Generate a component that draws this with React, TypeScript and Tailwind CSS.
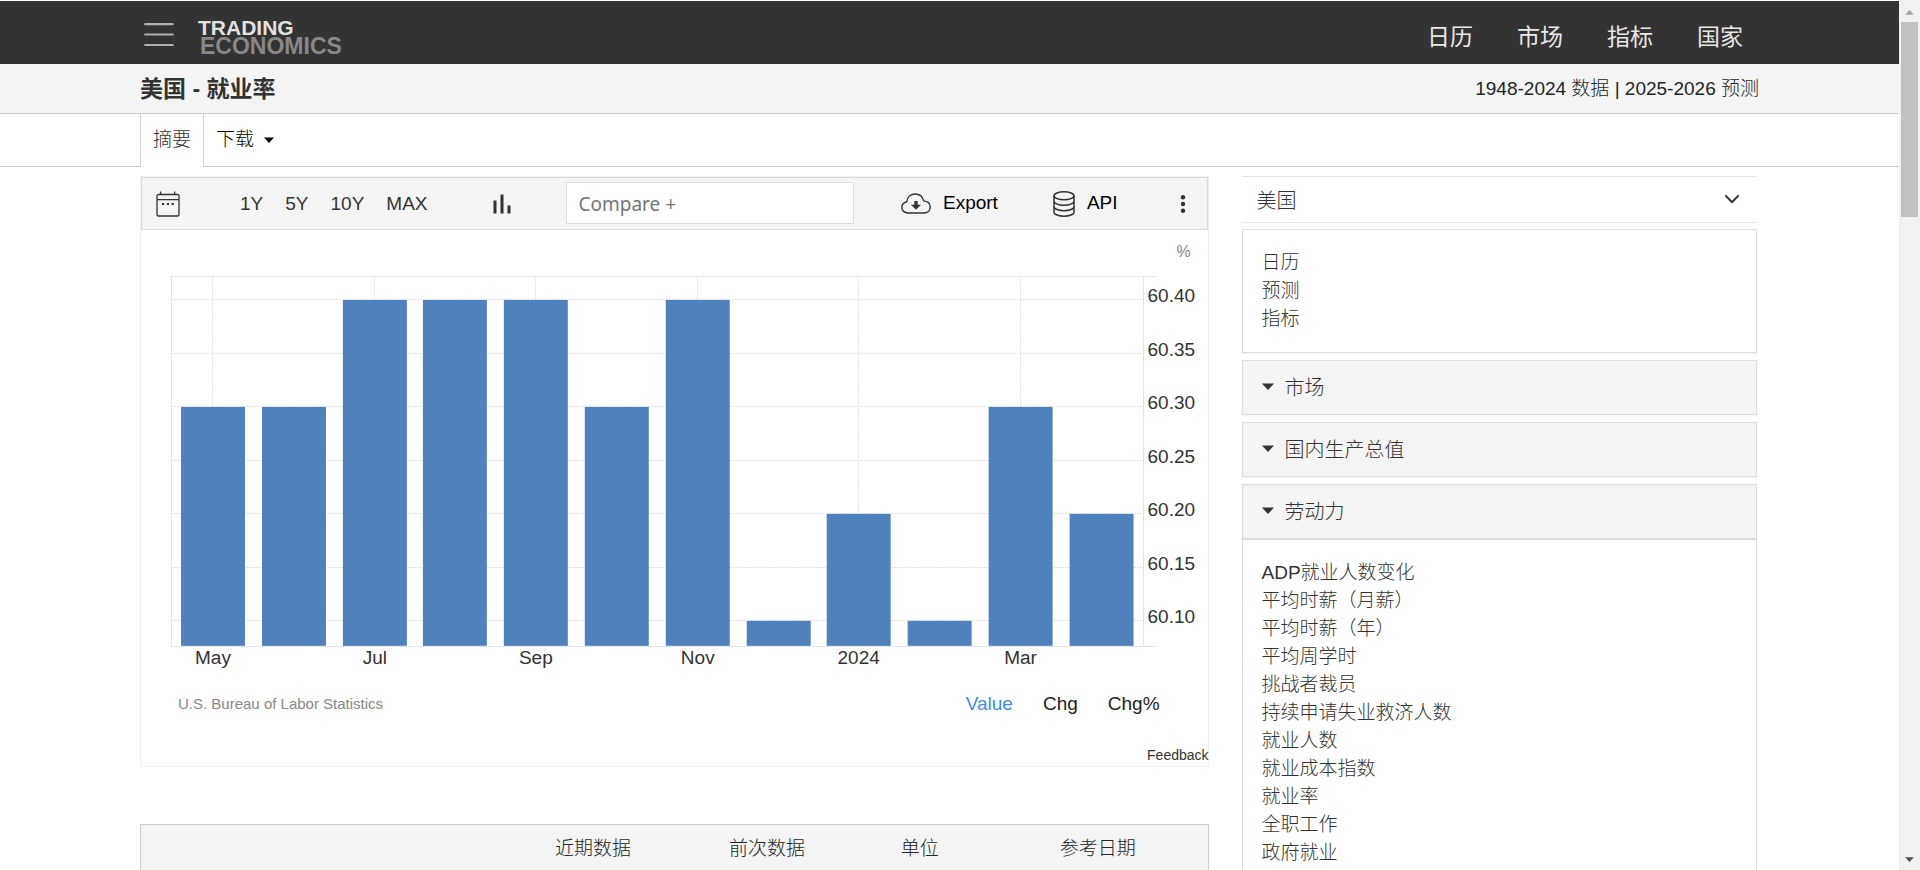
import { useState } from 'react';

interface BarPoint {
  month: string;
  value: number;
  label?: string;
}

interface MenuSection {
  title: string;
  links: string[];
}

const NAV_LINKS = ['日历', '市场', '指标', '国家'];
const RANGES = ['1Y', '5Y', '10Y', 'MAX'];
const MODES = ['Value', 'Chg', 'Chg%'];
const COUNTRY_LINKS = ['日历', '预测', '指标'];

const BARS: BarPoint[] = [
  { month: '2023-05', value: 60.3, label: 'May' },
  { month: '2023-06', value: 60.3 },
  { month: '2023-07', value: 60.4, label: 'Jul' },
  { month: '2023-08', value: 60.4 },
  { month: '2023-09', value: 60.4, label: 'Sep' },
  { month: '2023-10', value: 60.3 },
  { month: '2023-11', value: 60.4, label: 'Nov' },
  { month: '2023-12', value: 60.1 },
  { month: '2024-01', value: 60.2, label: '2024' },
  { month: '2024-02', value: 60.1 },
  { month: '2024-03', value: 60.3, label: 'Mar' },
  { month: '2024-04', value: 60.2 },
];

const TICKS = [60.4, 60.35, 60.3, 60.25, 60.2, 60.15, 60.1];

const SECTIONS: MenuSection[] = [
  { title: '市场', links: [] },
  { title: '国内生产总值', links: [] },
  {
    title: '劳动力',
    links: [
      'ADP就业人数变化',
      '平均时薪（月薪）',
      '平均时薪（年）',
      '平均周学时',
      '挑战者裁员',
      '持续申请失业救济人数',
      '就业人数',
      '就业成本指数',
      '就业率',
      '全职工作',
      '政府就业',
    ],
  },
];

// Chart geometry, in viewBox units
const PLOT = { left: 30, right: 1002, top: 46, bottom: 416 };
const STEP = 80.8;
const BAR_WIDTH = 64;
const xOf = (i: number) => Math.round(72 + i * STEP);
const yOf = (value: number) => Math.round(69 + ((60.4 - value) / 0.3) * 321.5);

function Caret({ className }: { className: string }) {
  return (
    <svg viewBox="0 0 12 7" className={className} aria-hidden="true">
      <path d="M0 0.5h12L6 7z" fill="currentColor" />
    </svg>
  );
}

function Header() {
  return (
    <header className="bg-[#333333]">
      <div className="mx-auto flex h-[63px] max-w-[1619px] items-center justify-between">
        <div className="flex items-center">
          <button aria-label="Menu" className="ml-[3px] mt-1 p-px">
            <svg viewBox="0 0 30 24" className="h-6 w-[30px]" aria-hidden="true">
              <path d="M1.2 1.2h27.6M1.2 11.5h27.6M1.2 22h27.6" stroke="#b0b0b0" strokeWidth="2.2" strokeLinecap="round" />
            </svg>
          </button>
          <a href="#home" className="ml-[23px] mt-[10px] flex flex-col font-bold">
            <span className="text-[21px] leading-[18px] text-[#e2e2e2]">TRADING</span>
            <span className="ml-[2px] text-[23px] leading-[19px] text-[#888888]">ECONOMICS</span>
          </a>
        </div>
        <nav className="mr-4 mt-[10px] flex gap-11 text-[23px] text-[#e8e8e8]">
          {NAV_LINKS.map((link) => (
            <a key={link} href={`#${link}`}>{link}</a>
          ))}
        </nav>
      </div>
    </header>
  );
}

function Tabs() {
  return (
    <div className="border-b border-[#c8c8c8]">
      <div className="mx-auto -mb-px flex h-[53px] max-w-[1619px] text-[19px] font-light">
        <a href="#summary" className="border-x border-[#d5d5d5] bg-white px-3 pt-3 text-[#333333]">摘要</a>
        <button className="flex items-center gap-[10px] px-3 text-black">
          下载
          <Caret className="mb-[2px] h-[6px] w-[10px]" />
        </button>
      </div>
    </div>
  );
}

function CalendarIcon() {
  return (
    <svg viewBox="0 0 24 26" className="h-[26px] w-6" fill="none" stroke="#333333" aria-hidden="true">
      <rect x="1" y="3.5" width="22" height="21.5" rx="1.5" strokeWidth="1.3" />
      <path d="M1 8.6h22M4.6 0.5v3M18.6 0.5v3" strokeWidth="1.3" />
      <path d="M6 13h2.2M10.8 13H13M15.6 13h2.2" strokeWidth="2.2" />
    </svg>
  );
}

function CloudIcon() {
  return (
    <svg viewBox="0 0 30 21" className="h-[21px] w-[30px]" fill="none" aria-hidden="true">
      <path
        d="M7 20C3.4 20 0.8 17.6 0.8 14.3C0.8 11 3.3 9.3 5.8 8.7C6.2 3.9 9.8 1 14.4 1C18.6 1 21.5 3.4 22.7 7.9C26.8 8.3 29.2 10.8 29.2 14.1C29.2 17.4 26.8 20 23.2 20Z"
        stroke="#333333"
        strokeWidth="1.4"
      />
      <path d="M13.3 8h3.4v3.7h3.4L15 16.8L9.9 11.7h3.4z" fill="#333333" />
    </svg>
  );
}

function DatabaseIcon() {
  return (
    <svg viewBox="0 0 22 26" className="h-[26px] w-[22px]" fill="none" stroke="#333333" strokeWidth="1.5" aria-hidden="true">
      <ellipse cx="11" cy="4.8" rx="10" ry="4" />
      <path d="M1 4.8v16.4c0 2.2 4.5 4 10 4s10-1.8 10-4V4.8" />
      <path d="M1 10.3c0 2.2 4.5 4 10 4s10-1.8 10-4M1 15.7c0 2.2 4.5 4 10 4s10-1.8 10-4" />
    </svg>
  );
}

function Toolbar() {
  const [compare, setCompare] = useState('');

  return (
    <div className="flex h-[53px] items-center border border-[#d9d9d9] bg-[#f4f4f4] pl-[14px] pr-[17px] text-[19px] text-[#333333]">
      <button aria-label="Calendar"><CalendarIcon /></button>
      <div className="ml-[60px] flex gap-[22px] pt-[2px]">
        {RANGES.map((range) => (
          <button key={range}>{range}</button>
        ))}
      </div>
      <button aria-label="Chart type" className="ml-[65px]">
        <svg viewBox="0 0 18 20" className="h-5 w-[18px]" aria-hidden="true">
          <path d="M2 6.5v13M9 0.5v19M16 11.5v8" stroke="#333333" strokeWidth="3" />
        </svg>
      </button>
      <input
        type="text"
        aria-label="Compare"
        placeholder="Compare +"
        value={compare}
        onChange={(e) => setCompare(e.target.value)}
        className="mb-px ml-[55px] h-[42px] min-w-0 flex-1 border border-[#dddddd] bg-white px-3 pt-[2px] font-['Noto_Sans',sans-serif] text-[19px] placeholder:text-[#757575]"
      />
      <button className="ml-[47px] flex items-center gap-3 text-black">
        <CloudIcon />
        Export
      </button>
      <button className="ml-[55px] flex items-center gap-3 text-black">
        <DatabaseIcon />
        API
      </button>
      <button aria-label="More" className="ml-[58px]">
        <svg viewBox="0 0 14 18" className="h-[18px] w-[14px]" fill="#333333" aria-hidden="true">
          <circle cx="7" cy="2.2" r="2.2" />
          <circle cx="7" cy="9" r="2.2" />
          <circle cx="7" cy="15.8" r="2.2" />
        </svg>
      </button>
    </div>
  );
}

function BarChart() {
  return (
    <svg viewBox="0 0 1067 445" className="block w-full" role="img" aria-label="U.S. employment rate by month">
      <g stroke="#e3e3e3" strokeDasharray="2 1" shapeRendering="crispEdges">
        <path d={`M${PLOT.left} ${PLOT.top}.5H${PLOT.right}`} />
        {TICKS.map((tick) => (
          <path key={tick} d={`M${PLOT.left} ${yOf(tick)}.5H${PLOT.right}`} />
        ))}
        {BARS.map((bar, i) => bar.label && (
          <path key={bar.month} d={`M${xOf(i) - 1}.5 ${PLOT.top}V${PLOT.bottom}`} />
        ))}
      </g>
      <g stroke="#e3e3e3" fill="none" shapeRendering="crispEdges">
        <path d={`M${PLOT.left}.5 ${PLOT.top}V${PLOT.bottom}`} />
        <path d={`M${PLOT.right}.5 ${PLOT.top}V${PLOT.bottom}`} />
        <path d={`M${PLOT.left} ${PLOT.bottom}.5H${PLOT.right + 12}`} />
        <path d={`M${PLOT.right} ${PLOT.top}.5h12`} />
      </g>
      {BARS.map((bar, i) => (
        <rect
          key={bar.month}
          x={xOf(i) - BAR_WIDTH / 2}
          y={yOf(bar.value) + 1}
          width={BAR_WIDTH}
          height={PLOT.bottom - yOf(bar.value) - 1}
          fill="#4f81bd"
        />
      ))}
      <g fill="#333333" fontSize="19">
        {TICKS.map((tick) => (
          <text key={tick} x="1007" y={yOf(tick) + 3}>{tick.toFixed(2)}</text>
        ))}
        {BARS.map((bar, i) => bar.label && (
          <text key={bar.month} x={xOf(i)} y="434" textAnchor="middle">{bar.label}</text>
        ))}
      </g>
      <text x="1036" y="27" fontSize="16" fill="#888888">%</text>
    </svg>
  );
}

function ChartPanel() {
  const [mode, setMode] = useState('Value');

  return (
    <section className="mb-[57px] border border-[#f1f1f1]">
      <Toolbar />
      <BarChart />
      <div className="flex h-[58px] items-center justify-between pl-[37px] pr-12">
        <span className="text-[15px] text-[#888888]">U.S. Bureau of Labor Statistics</span>
        <div className="flex gap-[30px] text-[19px]">
          {MODES.map((m) => (
            <button
              key={m}
              onClick={() => setMode(m)}
              className={m === mode ? 'text-[#3a8fde]' : 'text-[#222222]'}
            >
              {m}
            </button>
          ))}
        </div>
      </div>
      <div className="flex h-[33px] items-center justify-end pt-3">
        <a href="#feedback" className="-mr-px text-[14px] text-[#333333]">Feedback</a>
      </div>
    </section>
  );
}

function DataTable() {
  return (
    <table className="w-full table-fixed border border-[#cccccc] bg-[#f4f4f4] text-[19px] text-[#212529]">
      <thead>
        <tr className="h-[50px]">
          <td className="w-[34%]" />
          <th scope="col" className="w-[16.8%] font-light">近期数据</th>
          <th scope="col" className="w-[15.8%] font-light">前次数据</th>
          <th scope="col" className="w-[12.8%] font-light">单位</th>
          <th scope="col" className="w-[20.6%] font-light">参考日期</th>
        </tr>
      </thead>
    </table>
  );
}

function Sidebar() {
  const [open, setOpen] = useState('劳动力');

  return (
    <aside className="ml-[33px] mr-[2px] min-w-0 flex-1 font-light text-[#333333]">
      <div className="relative border-y border-[#e4e4ec]">
        <select
          aria-label="国家"
          defaultValue="美国"
          className="h-[45px] w-full appearance-none bg-white px-[15px] pt-[2px] text-[20px]"
        >
          <option>美国</option>
        </select>
        <svg viewBox="0 0 14 9" className="pointer-events-none absolute right-[18px] top-[18px] h-[9px] w-[14px]" fill="none" aria-hidden="true">
          <path d="M1 1l6 6.2L13 1" stroke="#343a40" strokeWidth="2" strokeLinecap="round" strokeLinejoin="round" />
        </svg>
      </div>
      <ul className="mt-[6px] h-[124px] border border-[#dddddd] px-[19px] pt-[19px] text-[19px] leading-7 shadow-xs">
        {COUNTRY_LINKS.map((link) => (
          <li key={link}><a href={`#${link}`}>{link}</a></li>
        ))}
      </ul>
      {SECTIONS.map((section) => (
        <div key={section.title} className="mt-[7px]">
          <button
            onClick={() => setOpen(section.title)}
            aria-expanded={open === section.title}
            className="flex h-[55px] w-full items-center gap-[11px] border border-[#dddddd] bg-[#f4f4f4] px-[19px] text-[20px] shadow-xs"
          >
            <Caret className="mb-[3px] h-[7px] w-3" />
            {section.title}
          </button>
          {open === section.title && section.links.length > 0 && (
            <ul className="border border-[#dddddd] px-[19px] py-[19px] text-[19px] leading-7">
              {section.links.map((link) => (
                <li key={link}><a href={`#${link}`}>{link}</a></li>
              ))}
            </ul>
          )}
        </div>
      ))}
    </aside>
  );
}

function ScrollTrack() {
  return (
    <div className="flex w-[21px] shrink-0 flex-col items-center bg-[#f1f1f1] pb-2 pt-[10px]" aria-hidden="true">
      <Caret className="h-[5px] w-[9px] rotate-180 text-[#a3a3a3]" />
      <div className="mt-[7px] h-[195px] w-[17px] bg-[#c1c1c1]" />
      <Caret className="mt-auto h-[5px] w-[9px] text-[#505050]" />
    </div>
  );
}

export default function App() {
  return (
    <div className="flex h-screen overflow-hidden bg-white font-['Liberation_Sans','Noto_Sans_CJK_SC',sans-serif]">
      <div className="min-w-0 flex-1 overflow-hidden pt-px">
        <Header />
        <div className="border-b border-[#cccccc] bg-[#f4f4f4]">
          <div className="mx-auto flex h-[49px] max-w-[1619px] items-center justify-between pt-[2px] text-[#333333]">
            <h1 className="text-[23px] font-bold">美国 - 就业率</h1>
            <h2 className="text-[19px] font-light text-[#212529]">1948-2024 数据 | 2025-2026 预测</h2>
          </div>
        </div>
        <Tabs />
        <main className="mx-auto flex max-w-[1619px] pt-[9px]">
          <div className="w-[66%] shrink-0">
            <ChartPanel />
            <DataTable />
          </div>
          <Sidebar />
        </main>
      </div>
      <ScrollTrack />
    </div>
  );
}
